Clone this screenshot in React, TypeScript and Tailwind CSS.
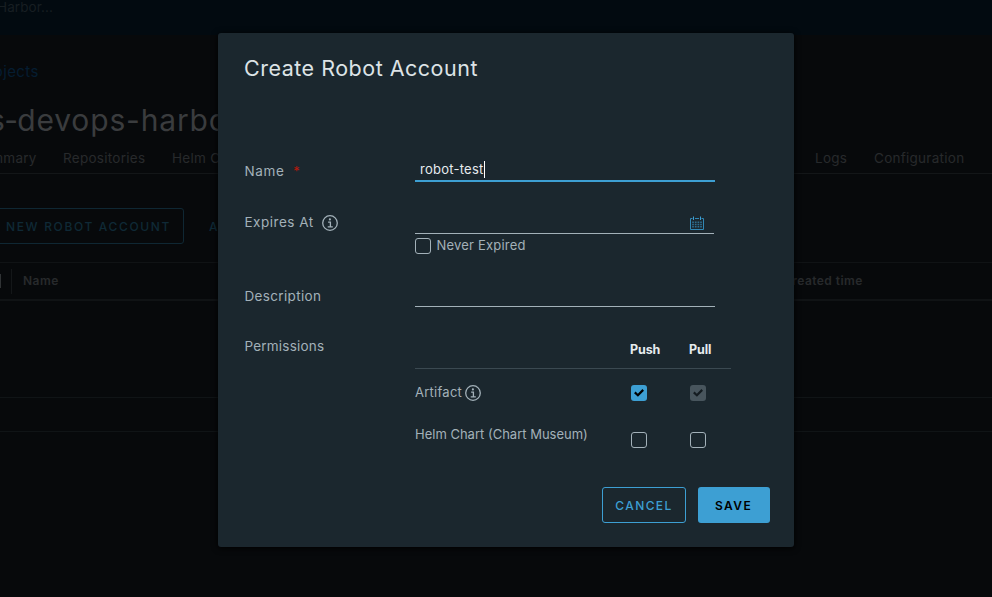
import type { ReactNode } from "react";

function InfoIcon({ className = "" }: { className?: string }) {
  return (
    <svg className={"size-4 shrink-0 " + className} viewBox="0 0 16 16" fill="none" stroke="#a3b1b9">
      <circle cx="8" cy="8" r="7.3" strokeWidth="1.3" />
      <circle cx="7.9" cy="4.4" r="1.1" fill="#a3b1b9" stroke="none" />
      <path d="M6.1 7.2H8.4V11.7M5.7 11.9H10.8" strokeWidth="1.3" />
    </svg>
  );
}

function CalendarIcon() {
  return (
    <svg className="h-[15px] w-[14px]" viewBox="0 0 14 15" fill="none">
      <path d="M2.5 2.5H.5V13.5H13.5V2.5H11.5M5 2.5H9" stroke="#3187b4" />
      <path d="M3.5 .5V4M10.5 .5V4" stroke="#3d9fd3" />
      <path d="M3 5.5V11.7M5.7 5.5V11.7M8.4 5.5V11.7M11 5.5V11.7" stroke="#2d6d8e" strokeWidth="1.7" strokeDasharray="1.5 .7" />
    </svg>
  );
}

function Checkbox({ state = "off" }: { state?: "off" | "on" | "disabled" }) {
  if (state === "off") {
    return <span className="block size-4 shrink-0 rounded-[3px] border border-[#a3b1b9]" />;
  }
  return (
    <span className={"block size-4 shrink-0 rounded-[3px] " + (state === "on" ? "bg-[#3d9fd3]" : "bg-[#48555d]")}>
      <svg viewBox="0 0 16 16" fill="none" stroke={state === "on" ? "#000" : "#141c21"} strokeWidth="2.2">
        <path d="M3.8 7.4L6.9 10.2L12.2 4.9" />
      </svg>
    </span>
  );
}

function Label({ children, className = "" }: { children: ReactNode; className?: string }) {
  return <div className={"-ml-[0.5px] flex w-[170.5px] shrink-0 text-[13.5px] leading-5 tracking-[0.25px] text-[#a3b1b9] " + className}>{children}</div>;
}

function Backdrop() {
  return (
    <div className="h-full w-full overflow-hidden whitespace-nowrap text-[#272a2c]">
      <header className="h-[35px] bg-[#020a10] text-[13.5px] leading-[15px] text-[#171e22]">
        <span className="-ml-[3px] tracking-[0.1px]">Harbor...</span>
      </header>
      <div className="box-content flex h-[138px] flex-col border-b border-[#131618]">
        <div className="mt-[27px] h-5 text-[15px] leading-5 tracking-[0.4px] text-[#051d31]"><span className="-ml-[12px]">rojects</span></div>
        <h1 className="mt-[18px] h-10 text-[30px] font-normal leading-[40px] tracking-[0.85px] text-[#3a3c3e]"><span className="-ml-[11px] tracking-[-0.7px]">s-</span>devops-harbor</h1>
        <nav className="mt-[8px] flex h-5 text-[13.5px] leading-5 tracking-[0.27px]">
          <span className="-ml-[26px] w-[89px]">Summary</span>
          <span className="w-[109px]">Repositories</span>
          <span className="w-[643px]">Helm Charts</span>
          <span className="w-[59px]">Logs</span>
          <span>Configuration</span>
        </nav>
      </div>
      <div className="mt-[34px] flex h-9 items-center">
        <span className="-ml-1 flex h-9 w-[188px] items-center rounded-[3px] border border-[#0f2733] pl-[9px] pt-px text-[12px] font-medium tracking-[1.65px] text-[#0f2936]">NEW ROBOT ACCOUNT</span>
        <span className="ml-[25px] pt-px text-[12px] font-medium tracking-[1.65px] text-[#0f2936]">ACTION</span>
      </div>
      <div className="mt-[18px] flex h-[39px] items-center border-b-2 border-t border-[#101315] text-[12px] font-semibold tracking-[0.45px]">
        <span className="h-[14px] w-px bg-[#303335]" />
        <span className="ml-[10px] h-[25px] w-px bg-[#141719]" />
        <span className="ml-[11px] w-[760px]">Name</span>
        <span>Created time</span>
      </div>
      <div className="h-[97px] border-b border-[#101416]" />
      <div className="h-[34px] border-b border-[#101416]" />
    </div>
  );
}

function Modal() {
  return (
    <section className="absolute left-[218px] top-[33px] flex h-[514px] w-[576px] flex-col rounded-[3px] bg-[#1b272e] pl-[27px] shadow-[0_1px_6px_#000]">
      <h2 className="-ml-px h-[117px] pt-[20px] text-[21.5px] font-normal leading-[30px] tracking-[0.5px] text-[#dde3e6]">Create Robot Account</h2>
      <div className="flex h-[52px]">
        <Label className="pt-[11px]"><span className="tracking-[0.6px]">Name</span><span className="ml-[9px] text-[13px] text-[#b5190c]">*</span></Label>
        <div className="flex h-8 w-[300px] items-start border-b-2 border-[#3d9fd3] pl-[5px] pt-[9px] text-[13px] leading-5 tracking-[0.25px] text-[#e6ebee]">
          robot-test<span className="mt-[2px] h-[17px] w-px bg-white" />
        </div>
      </div>
      <div className="flex h-[73px]">
        <Label className="pt-[10px]"><span className="tracking-[0.5px]">Expires At</span><InfoIcon className="ml-[8px] mt-[3px]" /></Label>
        <div>
          <div className="flex h-8 w-[299px] justify-end border-b border-[#a3b1b9] pr-[10px] pt-[14px]"><CalendarIcon /></div>
          <div className="mt-1 flex gap-[5.5px] text-[13px] leading-[15px] tracking-[0.2px] text-[#a3b1b9]"><Checkbox /><span>Never Expired</span></div>
        </div>
      </div>
      <div className="flex h-[55px]">
        <Label className="pt-[11px]"><span className="tracking-[0.35px]">Description</span></Label>
        <div className="h-8 w-[300px] border-b border-[#a3b1b9]" />
      </div>
      <div className="flex h-[157px]">
        <Label className="pt-[6px]"><span className="tracking-[0.2px]">Permissions</span></Label>
        <div className="w-[316px] text-[13px] text-[#a3b1b9]">
          <div className="flex h-[39px] border-b border-[#3b4951] pt-[10px] text-[12.5px] font-bold leading-5 tracking-[-0.1px] text-[#e6ebee]">
            <span className="ml-[215px] w-[59px]">Push</span><span>Pull</span>
          </div>
          <div className="flex h-[47px] pt-4">
            <div className="flex w-[216px] gap-[3px] leading-[14px] tracking-[0.25px]">Artifact <InfoIcon /></div>
            <div className="flex gap-[43px]"><Checkbox state="on" /><Checkbox state="disabled" /></div>
          </div>
          <div className="flex pt-4">
            <div className="w-[216px] whitespace-nowrap leading-[5px]">Helm Chart (Chart Museum)</div>
            <div className="flex gap-[43px]"><Checkbox /><Checkbox /></div>
          </div>
        </div>
      </div>
      <div className="flex gap-3 pl-[357px] text-[12px] font-medium tracking-[1.4px]">
        <button className="h-9 w-[84px] rounded-[3px] border border-[#3d9fd3] pt-px text-[#3d9fd3]">CANCEL</button>
        <button className="h-9 w-[72px] rounded-[3px] bg-[#3d9fd3] pr-px pt-px font-semibold text-black">SAVE</button>
      </div>
    </section>
  );
}

export default function App() {
  return (
    <main className="relative h-[597px] w-[992px] overflow-hidden bg-[#07090b] font-['Inter','Liberation_Sans',sans-serif]">
      <Backdrop />
      <Modal />
    </main>
  );
}
